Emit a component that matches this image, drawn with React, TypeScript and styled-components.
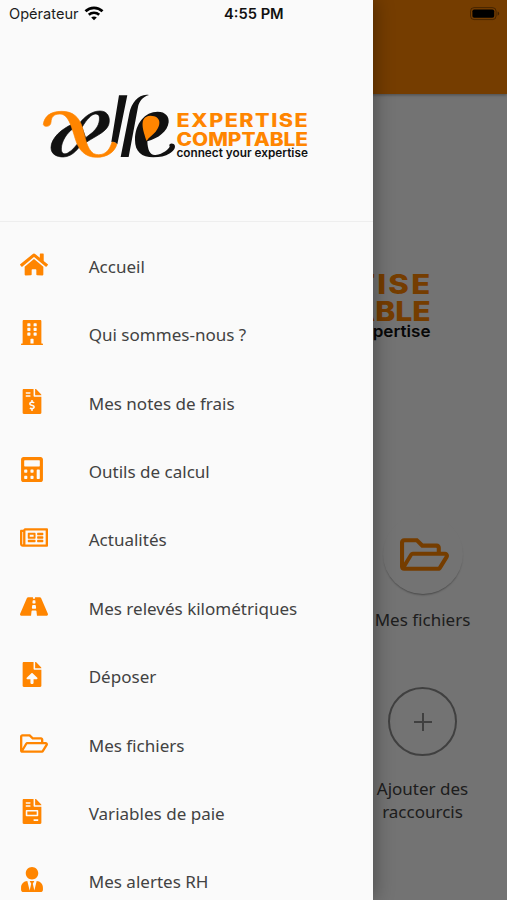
import React from "react";
import styled, { createGlobalStyle } from "styled-components";
import type { IconType } from "react-icons";
import {
  FaHome,
  FaBuilding,
  FaFileInvoiceDollar,
  FaCalculator,
  FaRegNewspaper,
  FaRoad,
  FaFileUpload,
  FaRegFolderOpen,
  FaFileInvoice,
  FaUserTie,
} from "react-icons/fa";

const ORANGE = "#ff8500";
const INK = "#111111";

const GlobalStyle = createGlobalStyle`
  * { box-sizing: border-box; }
  body {
    margin: 0;
    overflow: hidden;
    font-family: "Noto Sans", "Open Sans", sans-serif;
    color: #424242;
  }
`;

const Screen = styled.div`
  position: relative;
  width: 507px;
  height: 900px;
  overflow: hidden;
  background: #fafafa;
`;

const Page = styled.main`
  display: flex;
  flex-direction: column;
  height: 100%;
`;

const AppBar = styled.header`
  flex: none;
  display: flex;
  justify-content: flex-end;
  height: 94px;
  padding: 7px 6px 0 0;
  background: ${ORANGE};
  box-shadow: 0 1px 3px rgba(0, 0, 0, 0.35);
`;

const PageLogo = styled.div`
  display: flex;
  justify-content: flex-end;
  height: 420px;
  padding: 151.5px 73px 0 0;
`;

const Shortcuts = styled.section`
  display: flex;
  flex-direction: column;
  align-items: flex-end;
  padding-right: 24px;
`;

const Shortcut = styled.div<{ $height: number }>`
  display: flex;
  flex-direction: column;
  align-items: center;
  width: 121px;
  height: ${(p) => p.$height}px;
`;

const Disc = styled.div`
  display: grid;
  place-items: center;
  width: 80px;
  height: 80px;
  padding-left: 4px;
  border-radius: 50%;
  background: #fafafa;
  color: ${ORANGE};
  box-shadow: 0 2px 2px -1px rgba(0, 0, 0, 0.4);
`;

const AddDisc = styled.div`
  display: grid;
  place-items: center;
  width: 69px;
  height: 69px;
  border: 2px solid #8c8c8c;
  border-radius: 50%;
  color: #8c8c8c;
`;

const Caption = styled.div<{ $gap: number }>`
  margin-top: ${(p) => p.$gap}px;
  font-size: 17px;
  line-height: 23px;
  text-align: center;
`;

const Scrim = styled.div`
  position: absolute;
  inset: 0;
  background: rgba(0, 0, 0, 0.54);
`;

const Drawer = styled.aside`
  position: absolute;
  inset: 0 auto 0 0;
  display: flex;
  flex-direction: column;
  width: 372.5px;
  background: #fafafa;
  box-shadow: 2px 0 18px rgba(0, 0, 0, 0.32);
`;

const StatusBar = styled.div`
  flex: none;
  display: flex;
  align-items: center;
  height: 27px;
  padding-left: 9px;
  font-family: Inter, "Liberation Sans", sans-serif;
  font-size: 14.6px;
  color: #1c1c1c;
`;

const Carrier = styled.span`
  width: 75px;
  white-space: nowrap;
`;

const Clock = styled.span`
  margin-left: 120px;
  font-weight: 600;
  font-size: 14.7px;
  white-space: nowrap;
  color: #111;
`;

const DrawerHeader = styled.div`
  flex: none;
  height: 195px;
  padding: 67px 0 0 42px;
  border-bottom: 1px solid #eeeeee;
`;

const Menu = styled.nav`
  display: flex;
  flex-direction: column;
  padding-top: 10.1px;
`;

const MenuItem = styled.a`
  flex: none;
  display: flex;
  align-items: center;
  height: 68.4px;
  padding-left: 20.3px;
`;

const IconSlot = styled.span<{ $wide?: boolean }>`
  flex: none;
  display: flex;
  width: 24px;
  margin-bottom: 4px;
  color: ${ORANGE};

  svg {
    flex: none;
    width: ${(p) => (p.$wide ? 28 : 22)}px;
    height: 25px;
    margin: 0 auto;
  }
`;

const MenuLabel = styled.span`
  margin: 1px 0 0 44.4px;
  font-size: 17.05px;
  line-height: 24px;
  white-space: nowrap;
`;

const ITEMS: { icon: IconType; label: string; wide?: boolean }[] = [
  { icon: FaHome, label: "Accueil", wide: true },
  { icon: FaBuilding, label: "Qui sommes-nous ?" },
  { icon: FaFileInvoiceDollar, label: "Mes notes de frais" },
  { icon: FaCalculator, label: "Outils de calcul" },
  { icon: FaRegNewspaper, label: "Actualités", wide: true },
  { icon: FaRoad, label: "Mes relevés kilométriques", wide: true },
  { icon: FaFileUpload, label: "Déposer" },
  { icon: FaRegFolderOpen, label: "Mes fichiers", wide: true },
  { icon: FaFileInvoice, label: "Variables de paie" },
  { icon: FaUserTie, label: "Mes alertes RH" },
];

function Logo({ scale = 1 }: { scale?: number }) {
  return (
    <svg width={268 * scale} height={67 * scale} viewBox="42 94 268 67">
      <g transform="translate(35 85) scale(0.3333)">
        <g fill={INK} stroke={INK} strokeWidth="2" fillRule="evenodd">
          <path d="M112 118C80 131 48 160 48 188C48 208 66 216 85 216C115 215 132 188 148 165ZM114 131C97 143 79 168 79 192C79 207 89 209 98 204C113 196 123 182 134 168Z" />
          <path d="M131 118C148 95 170 78 195 78C215 78 223 92 223 107C223 138 190 148 152 173ZM141 127C155 103 170 87 182 87C194 87 195 98 192 112C187 133 170 145 152 158Z" />
        </g>
        <path
          fill={ORANGE}
          stroke={ORANGE}
          strokeWidth="2"
          d="M25 118C28 95 45 79 80 79C114 79 132 96 142 127C151 157 155 192 176 206C196 214 218 207 228 180L232 169L246 176C240 202 215 217 185 217C150 217 131 195 121 162C109 122 99 87 75 87C56 87 49 96 48 112C47 128 25 126 25 118Z"
        />
        <path fill={INK} d="M252 31H277L247 178C243 172 237 169 229 171Z" />
        <path
          fill={INK}
          d="M342 30C322 36 312 50 309 66L281 216H257L283 85C290 52 312 25 342 30Z"
        />
        <path
          fill={INK}
          d="M337 169C338 195 345 212 362 210C385 207 400 192 404 185C400 177 409 173 416 177C424 183 420 195 405 205C390 214 375 217 355 217C320 217 300 200 300 165C300 115 330 80 368 80C392 80 403 95 401 112C398 140 370 160 337 169Z"
        />
        <path
          fill={ORANGE}
          d="M335 168C325 138 309 95 346 92C382 93 377 122 362 140C352 152 341 156 335 168Z"
        />
      </g>
      <g fontFamily="Inter, Lato, sans-serif">
        <g fill={ORANGE} fontWeight="800" fontSize="18.4">
          <text x="176.6" y="127.4" letterSpacing="1.3" textLength="132.6" lengthAdjust="spacingAndGlyphs">
            EXPERTISE
          </text>
          <text x="176.6" y="146" textLength="131.5" lengthAdjust="spacingAndGlyphs">
            COMPTABLE
          </text>
        </g>
        <text
          x="176.4"
          y="157"
          fill={INK}
          fontWeight="600"
          fontSize="11.2"
          textLength="131.5"
          lengthAdjust="spacingAndGlyphs"
        >
          connect your expertise
        </text>
      </g>
    </svg>
  );
}

function WifiIcon() {
  return (
    <svg width="20" height="15" viewBox="0 0 20 15" fill="none" stroke="#000">
      <path d="M1.5 5.3C6.3.6 13.7.6 18.5 5.3" strokeWidth="2.7" />
      <path d="M4.8 8.8C7.8 6 12.2 6 15.2 8.8" strokeWidth="2.6" />
      <path d="M10 14.2L7.2 11.5C8.8 10.1 11.2 10.1 12.8 11.5Z" fill="#000" stroke="none" />
    </svg>
  );
}

function BatteryIcon() {
  return (
    <svg width="32" height="14" viewBox="0 0 32 14">
      <rect x="1.5" y=".6" width="25.6" height="12" rx="3.6" fill="none" stroke="#000" strokeOpacity=".4" />
      <rect x="3.4" y="2.4" width="21.8" height="8.4" rx="1.8" fill="#000" />
      <path d="M28.6 4.5C30.7 5.2 30.7 8 28.6 8.7Z" fill="#000" fillOpacity=".45" />
    </svg>
  );
}

export default function App() {
  return (
    <Screen>
      <GlobalStyle />
      <Page>
        <AppBar>
          <BatteryIcon />
        </AppBar>
        <PageLogo>
          <Logo scale={1.45} />
        </PageLogo>
        <Shortcuts>
          <Shortcut $height={173}>
            <Disc>
              <FaRegFolderOpen size={49} />
            </Disc>
            <Caption $gap={14}>Mes fichiers</Caption>
          </Shortcut>
          <Shortcut $height={140}>
            <AddDisc>
              <svg width="20" height="20" viewBox="0 0 20 20" stroke="currentColor" strokeWidth="2">
                <path d="M10 1V19M1 10H19" />
              </svg>
            </AddDisc>
            <Caption $gap={21}>
              Ajouter des
              <br />
              raccourcis
            </Caption>
          </Shortcut>
        </Shortcuts>
      </Page>
      <Scrim />
      <Drawer>
        <StatusBar>
          <Carrier>Opérateur</Carrier>
          <WifiIcon />
          <Clock>4:55 PM</Clock>
        </StatusBar>
        <DrawerHeader>
          <Logo />
        </DrawerHeader>
        <Menu>
          {ITEMS.map(({ icon: Icon, label, wide }) => (
            <MenuItem key={label}>
              <IconSlot $wide={wide}>
                <Icon />
              </IconSlot>
              <MenuLabel>{label}</MenuLabel>
            </MenuItem>
          ))}
        </Menu>
      </Drawer>
    </Screen>
  );
}
